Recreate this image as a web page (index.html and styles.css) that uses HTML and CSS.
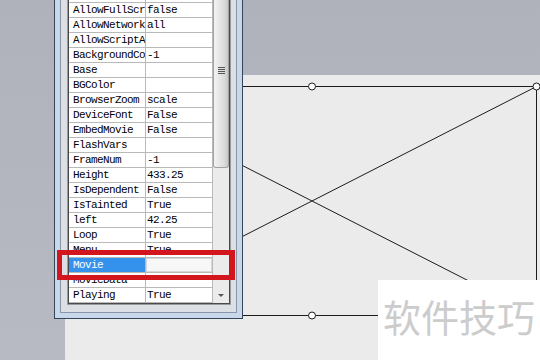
FILE: index.html
```html
<!DOCTYPE html>
<html lang="zh-CN">
<head>
    <meta charset="UTF-8">
    <meta name="viewport" content="width=device-width, initial-scale=1.0">
    <title>属性</title>
    <link rel="stylesheet" href="styles.css">
</head>
<body>
    <div class="stage">
        <div class="slide">
            <svg class="placeholder" width="475" height="285" viewBox="0 0 475 285">
                <rect x="22.5" y="11.5" width="449" height="229" fill="none" stroke="#1c1c1c" stroke-width="1"/>
                <line x1="22.5" y1="11.5" x2="471.5" y2="240.5" stroke="#1c1c1c" stroke-width="1"/>
                <line x1="22.5" y1="240.5" x2="471.5" y2="11.5" stroke="#1c1c1c" stroke-width="1"/>
                <circle cx="247" cy="11.5" r="3.5" fill="#fff" stroke="#1c1c1c"/>
                <circle cx="471.5" cy="11.5" r="3.5" fill="#fff" stroke="#1c1c1c"/>
                <circle cx="247" cy="240.5" r="3.5" fill="#fff" stroke="#1c1c1c"/>
            </svg>
        </div>

        <!-- 属性窗口 -->
        <div class="win">
            <div class="win-body">
                <div class="grid-box">
                    <div class="rows">
                        <div class="row"><div class="name"></div><div class="val"></div></div>
                        <div class="row"><div class="name">AllowFullScr</div><div class="val">false</div></div>
                        <div class="row"><div class="name">AllowNetwork</div><div class="val">all</div></div>
                        <div class="row"><div class="name">AllowScriptA</div><div class="val"></div></div>
                        <div class="row"><div class="name">BackgroundCo</div><div class="val">-1</div></div>
                        <div class="row"><div class="name">Base</div><div class="val"></div></div>
                        <div class="row"><div class="name">BGColor</div><div class="val"></div></div>
                        <div class="row"><div class="name">BrowserZoom</div><div class="val">scale</div></div>
                        <div class="row"><div class="name">DeviceFont</div><div class="val">False</div></div>
                        <div class="row"><div class="name">EmbedMovie</div><div class="val">False</div></div>
                        <div class="row"><div class="name">FlashVars</div><div class="val"></div></div>
                        <div class="row"><div class="name">FrameNum</div><div class="val">-1</div></div>
                        <div class="row"><div class="name">Height</div><div class="val">433.25</div></div>
                        <div class="row"><div class="name">IsDependent</div><div class="val">False</div></div>
                        <div class="row"><div class="name">IsTainted</div><div class="val">True</div></div>
                        <div class="row"><div class="name">left</div><div class="val">42.25</div></div>
                        <div class="row"><div class="name">Loop</div><div class="val">True</div></div>
                        <div class="row"><div class="name">Menu</div><div class="val">True</div></div>
                        <div class="row selected"><div class="name">Movie</div><div class="val edit"></div></div>
                        <div class="row"><div class="name">MovieData</div><div class="val"></div></div>
                        <div class="row"><div class="name">Playing</div><div class="val">True</div></div>
                    </div>
                    <div class="scrollbar">
                        <div class="thumb"><span class="grip"></span></div>
                        <div class="track"></div>
                        <div class="arrow-down"></div>
                    </div>
                </div>
            </div>
        </div>

        <div class="mark"></div>

        <div class="watermark">软件技巧</div>
    </div>
</body>
</html>
```

FILE: styles.css
```css
body { margin: 0; }
.stage { position: relative; width: 540px; height: 360px; overflow: hidden; background: linear-gradient(#afb2ba, #b7bac2); }
.slide { margin: 75px 0 0 65px; height: 285px; background: #ebebeb; }
.placeholder { display: block; }

/* window */
.win { position: absolute; left: 54px; top: 0; width: 189px; box-sizing: border-box; border: 1px solid #37455a; border-top: none; padding: 0 5px 5px; background: #c8d8ea; }
.win-body { border: 1px solid #8896a8; border-top: none; background: #dcdfe3; padding: 0 5px 7px 6px; }
.grid-box { display: flex; margin-top: -12px; border: 1px solid #9a9a9a; border-top: none; box-shadow: inset 1px 0 0 #4a4a4a, inset -1px 0 0 #4a4a4a, inset 0 -1px 0 #4a4a4a; padding: 0 1px 1px; background: #fff; }
.rows { width: 144px; }
.row { display: grid; grid-template-columns: 77px 67px; height: 14px; border-bottom: 1px solid #b9b9b9; font-family: "Liberation Mono", "DejaVu Sans Mono", monospace; font-size: 11px; letter-spacing: -0.6px; line-height: 14px; color: #000; }
.name, .val { overflow: hidden; white-space: nowrap; border-right: 1px solid #b9b9b9; }
.name { padding-left: 4px; }
.val { padding-left: 1px; }
.selected .name { background: #3592ec; color: #fff; }
.edit { box-shadow: inset 0 0 0 1px #d6d6d6; background: #f7f7f7; }

/* scrollbar */
.scrollbar { width: 16px; display: flex; flex-direction: column; background: #ebebeb; }
.thumb { height: 180px; box-sizing: border-box; border: 1px solid #a2a2a2; border-top: none; border-radius: 0 0 3px 3px; background: linear-gradient(90deg, #f3f3f3, #dcdcdc 70%, #c8c8c8); display: flex; justify-content: center; padding-top: 79px; }
.grip { width: 7px; height: 7px; background: repeating-linear-gradient(#555 0 1px, transparent 1px 2px); }
.track { flex: 1; }
.arrow-down { height: 15px; display: flex; align-items: center; justify-content: center; }
.arrow-down::before { content: ""; border-left: 3px solid transparent; border-right: 3px solid transparent; border-top: 3px solid #555; }

/* red highlight */
.mark { position: absolute; left: 57px; top: 250px; width: 178px; height: 30px; box-sizing: border-box; border: 5px solid #d3151d; }

.watermark { position: absolute; right: 0; bottom: 0; width: 162px; height: 80px; box-sizing: border-box; background: #fff; padding: 17px 0 0 5px; font-family: "Noto Sans CJK SC", sans-serif; font-size: 38px; line-height: 38px; color: #cccccc; white-space: nowrap; }
```
